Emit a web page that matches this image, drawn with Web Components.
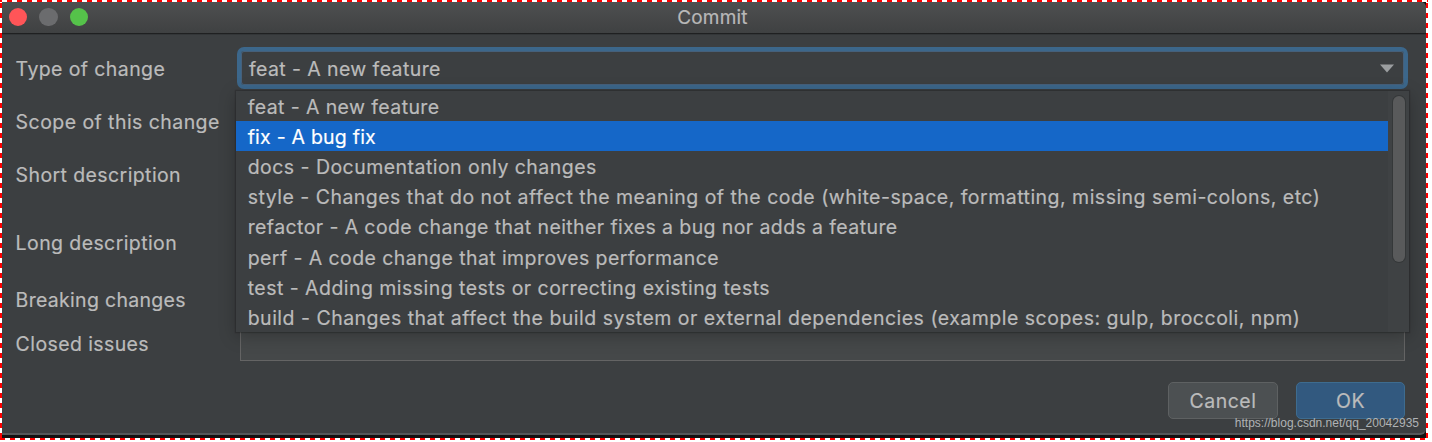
<!DOCTYPE html>
<html lang="en">
<head>
<meta charset="utf-8">
<title>Commit</title>
<style>
html,body{margin:0;background:#fff}
body{font-family:Inter,"Liberation Sans",sans-serif;font-size:19.5px;color:#bbb;-webkit-text-stroke:.2px}
</style>
</head>
<body>
<commit-dialog></commit-dialog>
<script>
function define(name, html) {
  const t = document.createElement('template');
  t.innerHTML = html;
  customElements.define(name, class extends HTMLElement {
    constructor() {
      super();
      this.attachShadow({mode: 'open'}).append(t.content.cloneNode(true));
    }
  });
}

define('title-bar', `<style>
:host{display:grid;grid-template-columns:1fr auto 1fr;align-items:center;height:31px;background:linear-gradient(#4e4f50,#3f4142);border-bottom:1px solid #1f2021;box-shadow:0 1px #333638;border-radius:0 5px 0 0}
.lights{display:flex;gap:12px;padding:0 0 1px 7.3px}
i{width:18.2px;height:18.2px;border-radius:50%;background:#ff5558}
i:nth-child(2){background:#6b6c6e}i:nth-child(3){background:#55c24a}
span{font-size:19px;color:#b8b8b8;letter-spacing:.2px;margin-left:-3px}
</style><div class="lights"><i></i><i></i><i></i></div><span><slot></slot></span>`);

define('form-label', `<style>
:host{display:block;line-height:24px;height:24px;margin-top:8px;margin-left:-.4px;white-space:nowrap;letter-spacing:var(--ls,.4px)}
</style><slot></slot>`);

define('combo-box', `<style>
:host{display:flex;box-sizing:border-box;align-items:center;justify-content:space-between;height:42px;border:4px solid #3c678b;border-radius:7px;background:#3c3f41;padding:1px 10px 0 8px;letter-spacing:.4px;white-space:nowrap;box-shadow:inset 0 0 0 1px #46607a}
svg{display:block}
</style><span><slot></slot></span><svg width="14" height="9"><path d="M0 .5H14L7 8.5Z" fill="#9b9ea0"/></svg>`);

define('option-item', `<style>
:host{display:flex;box-sizing:border-box;align-items:center;height:30.15px;padding:1.5px 0 0 11.7px;white-space:nowrap;letter-spacing:var(--ls,.4px)}
:host([selected]){background:#1567c8;color:#fff}
</style><span><slot></slot></span>`);

define('option-list', `<style>
:host{display:flex;box-sizing:border-box;width:1173px;height:241px;background:#3c3f41;box-shadow:0 4px 16px rgba(0,0,0,.25),0 0 1px 1px rgba(35,37,38,.4)}
.items{width:1152px;flex:none}
.track{flex:1;background:#3f4244;padding:5px 4px 0 5px}
.thumb{height:166px;border-radius:7px;background:#595a5b;box-shadow:0 0 0 1px #353839;width:12px}
</style><div class="items"><slot></slot></div><div class="track"><div class="thumb"></div></div>`);

define('text-input', `<style>
:host{display:block;box-sizing:border-box;background:#454849;border:1.5px solid #646464}
</style>`);

define('push-button', `<style>
:host{display:flex;box-sizing:border-box;align-items:center;justify-content:center;width:110px;height:37px;border:1px solid #5e6162;border-radius:5px;background:#4c5052;letter-spacing:.5px}
:host([primary]){width:109px;background:#32597f;border-color:#3e6c8f}
</style><slot></slot>`);

define('commit-dialog', `<style>
:host{display:block;position:relative;box-sizing:border-box;width:1428px;height:440px;padding:2px;
background:
repeating-linear-gradient(90deg,red 0 2px,#fff 2px 7px,red 7px 10px) 0 0/100% 2px no-repeat,
repeating-linear-gradient(90deg,red 0 5px,#fff 5px 10px) 0 100%/100% 2px no-repeat,
repeating-linear-gradient(#fff 0 3px,red 3px 8px,#fff 8px 10px) 0 0/2px 100% no-repeat,
repeating-linear-gradient(#fff 0 3px,red 3px 8px,#fff 8px 10px) 100% 0/2px 100% no-repeat,#fff}
.back{height:436px;background:#111;overflow:hidden}
.win{box-sizing:border-box;height:433px;background:#3c3f41;border-bottom:2px solid #55585a;border-radius:0 5px 6px 0;overflow:hidden}
.form{display:grid;grid-template-columns:221px 1171px;grid-template-rows:53px 53px 68px 57px 44px 41px;padding:15px 0 0 14px;height:316px;box-sizing:border-box;align-items:start}
.form>combo-box{margin-top:-2px}
.form>text-input{width:1165px;margin:7px 0 0 3px;height:30px}
.buttons{display:flex;gap:18px;justify-content:flex-end;padding:32px 21px 0 0}
option-list{position:absolute;left:236px;top:91px}
.mark{position:absolute;right:9px;top:415px;font:12px/17px "Liberation Sans",sans-serif;color:#b0b3b5;-webkit-text-stroke:0}
</style>
<div class="back"><div class="win"><title-bar>Commit</title-bar>
<div class="form">
<form-label>Type of change</form-label><combo-box>feat - A new feature</combo-box>
<form-label style="--ls:.44px">Scope of this change</form-label><text-input></text-input>
<form-label>Short description</form-label><text-input></text-input>
<form-label>Long description</form-label><text-input></text-input>
<form-label style="--ls:.3px">Breaking changes</form-label><text-input></text-input>
<form-label>Closed issues</form-label><text-input></text-input>
</div>
<div class="buttons"><push-button>Cancel</push-button><push-button primary>OK</push-button></div>
</div></div>
<option-list>
<option-item>feat - A new feature</option-item>
<option-item selected style="--ls:.22px">fix - A bug fix</option-item>
<option-item style="--ls:.46px">docs - Documentation only changes</option-item>
<option-item style="--ls:.48px">style - Changes that do not affect the meaning of the code (white-space, formatting, missing semi-colons, etc)</option-item>
<option-item>refactor - A code change that neither fixes a bug nor adds a feature</option-item>
<option-item style="--ls:.42px">perf - A code change that improves performance</option-item>
<option-item style="--ls:.46px">test - Adding missing tests or correcting existing tests</option-item>
<option-item style="--ls:.49px">build - Changes that affect the build system or external dependencies (example scopes: gulp, broccoli, npm)</option-item>
</option-list>
<span class="mark">https://blog.csdn.net/qq_20042935</span>`);
</script>
</body>
</html>
